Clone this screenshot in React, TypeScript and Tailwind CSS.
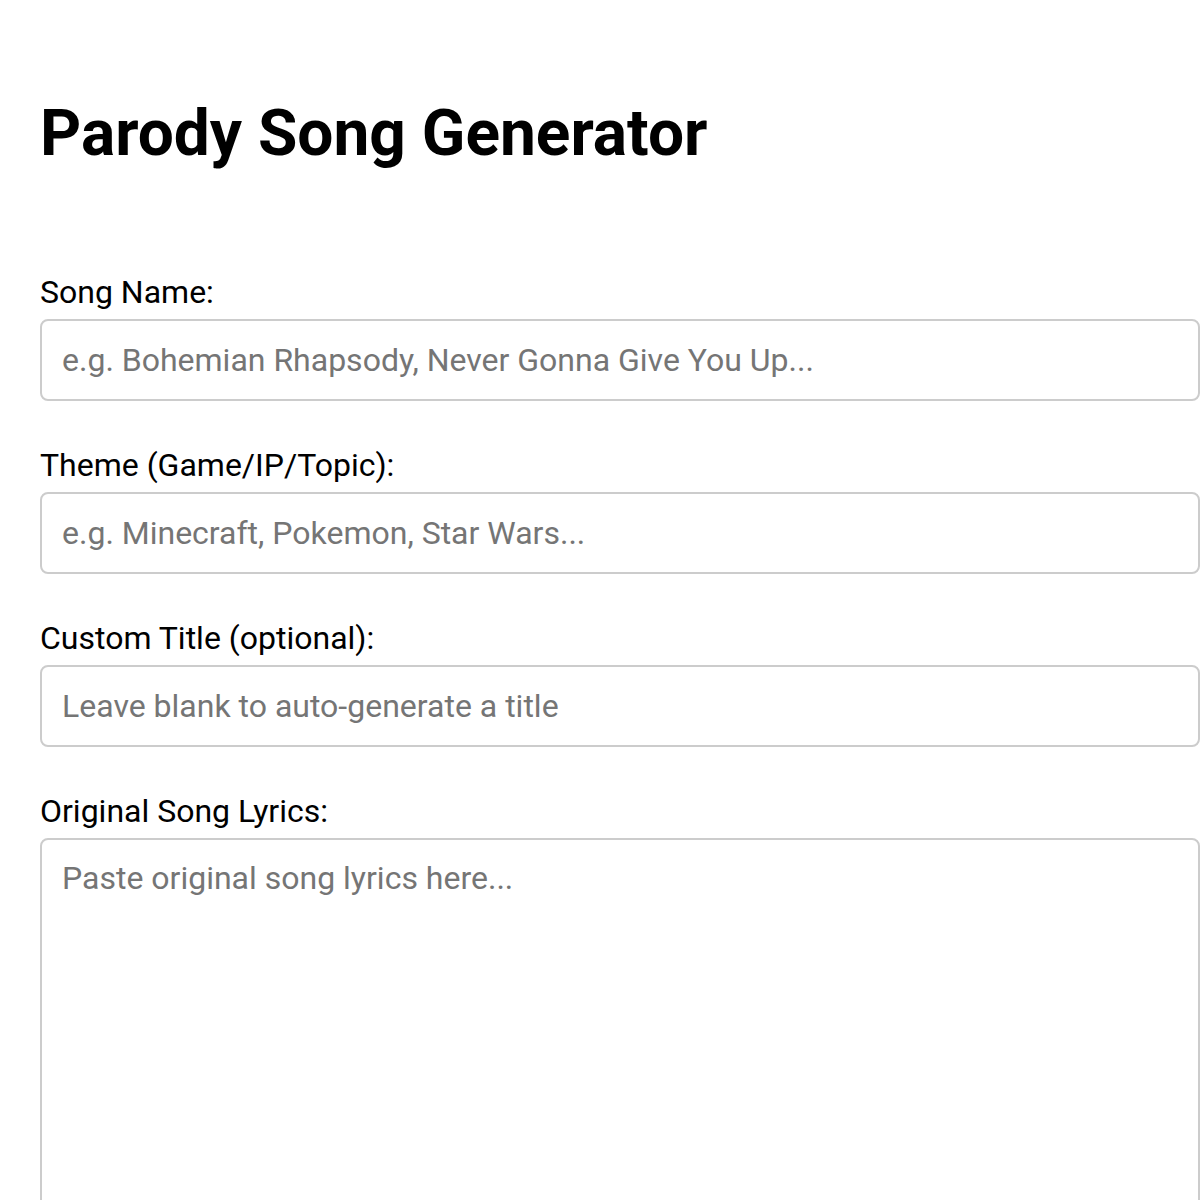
import React, { useState } from 'react';

const fields = [
  { id: 'song', label: 'Song Name:', placeholder: 'e.g. Bohemian Rhapsody, Never Gonna Give You Up...' },
  { id: 'theme', label: 'Theme (Game/IP/Topic):', placeholder: 'e.g. Minecraft, Pokemon, Star Wars...' },
  { id: 'title', label: 'Custom Title (optional):', placeholder: 'Leave blank to auto-generate a title' },
];

export default function App() {
  const [values, setValues] = useState<Record<string, string>>({});
  const [lyrics, setLyrics] = useState('');

  return (
    <div className="min-h-screen bg-white pl-10 font-['Roboto',sans-serif] text-black">
      {/* Header */}
      <h1 className="pt-[96px] text-[64px] font-bold leading-[75px]">
        Parody Song Generator
      </h1>

      {/* Form */}
      <form className="mt-[102px] flex flex-col" onSubmit={e => e.preventDefault()}>
        {fields.map(f => (
          <div key={f.id} className="mb-[45px] flex flex-col">
            <label htmlFor={f.id} className="mb-[8px] text-[32px] leading-[38px]">
              {f.label}
            </label>
            <input
              id={f.id}
              type="text"
              value={values[f.id] || ''}
              onChange={e => setValues(v => ({ ...v, [f.id]: e.target.value }))}
              placeholder={f.placeholder}
              className="h-[82px] w-full rounded-lg border-2 border-[#cccccc] px-5 text-[32px] leading-[37px] outline-none placeholder:text-[#757575]"
            />
          </div>
        ))}

        <div className="flex flex-col">
          <label htmlFor="lyrics" className="mb-[8px] text-[32px] leading-[38px]">
            Original Song Lyrics:
          </label>
          <textarea
            id="lyrics"
            value={lyrics}
            onChange={e => setLyrics(e.target.value)}
            placeholder="Paste original song lyrics here..."
            className="h-[420px] w-full resize-none rounded-lg border-2 border-[#cccccc] px-5 py-5 text-[32px] leading-[37px] outline-none placeholder:text-[#757575]"
          />
        </div>
      </form>
    </div>
  );
}
